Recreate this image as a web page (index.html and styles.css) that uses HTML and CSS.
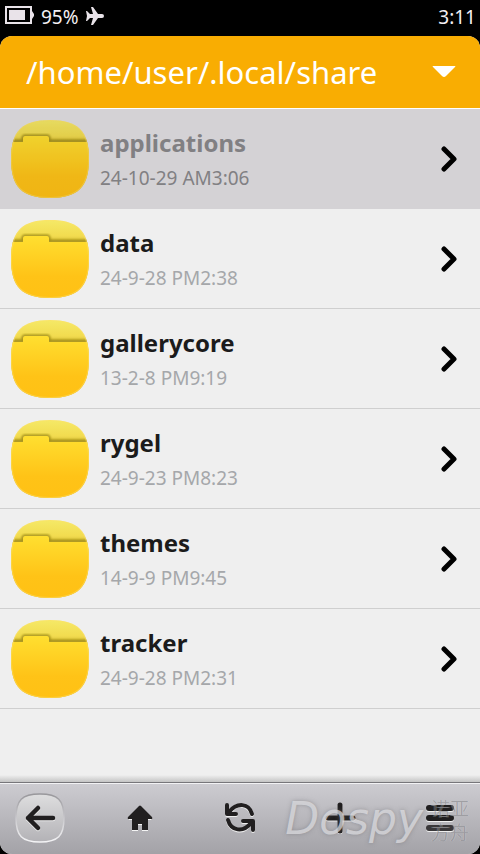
FILE: index.html
```html
<!DOCTYPE html>
<html lang="en">
<head>
<meta charset="utf-8">
<meta name="viewport" content="width=device-width, initial-scale=1">
<title>File manager</title>
<link rel="stylesheet" href="styles.css">
</head>
<body>
<svg class="defs" aria-hidden="true">
  <defs>
    <linearGradient id="back" x1="0" y1="0" x2="0" y2="1">
      <stop offset="0" stop-color="#f5e967"/>
      <stop offset=".2" stop-color="#f2dc50"/>
      <stop offset=".28" stop-color="#e0c53c"/>
    </linearGradient>
    <linearGradient id="front" x1="0" y1="16" x2="0" y2="78" gradientUnits="userSpaceOnUse">
      <stop offset="0" stop-color="#ffdf30"/>
      <stop offset=".65" stop-color="#ffc317"/>
      <stop offset="1" stop-color="#ffc114"/>
    </linearGradient>
    <filter id="soft" x="-10%" y="-50%" width="120%" height="200%"><feGaussianBlur stdDeviation="1.2"/></filter>
    <clipPath id="shape"><path d="M39 0C67 0 78 11 78 39S67 78 39 78 0 67 0 39 11 0 39 0Z"/></clipPath>
    <symbol id="folder" viewBox="0 0 78 78">
      <g clip-path="url(#shape)">
        <rect width="78" height="78" fill="url(#back)"/>
        <path d="M-4 21H12V18Q12 16 14 16H36Q38 16 38 18V21H82" fill="none" stroke="#8f7d10" stroke-opacity=".8" stroke-width="3" filter="url(#soft)"/>
        <path d="M0 22H12V18Q12 16 14 16H36Q38 16 38 18V22H78V78H0Z" fill="url(#front)"/>
        <path d="M39 0C67 0 78 11 78 39S67 78 39 78 0 67 0 39 11 0 39 0Z" fill="none" stroke="#ffe06a" stroke-opacity=".45" stroke-width="2"/>
      </g>
    </symbol>
    <symbol id="chevron" viewBox="0 0 16 26">
      <path d="M3 3L13 13 3 23" fill="none" stroke="#000" stroke-width="5" stroke-linecap="round" stroke-linejoin="round"/>
    </symbol>
  </defs>
</svg>

<div class="status">
  <div class="status-left">
    <svg class="battery" viewBox="0 0 29 18" aria-label="Battery"><path d="M1 1H26V17H1Z" fill="none" stroke="#e9e3e9" stroke-width="2"/><path d="M4 4H20V14H4Z" fill="#e9e3e9"/><path d="M26 5H27L29 8V10L27 13H26Z" fill="#e9e3e9"/></svg>
    <span>95%</span>
    <svg class="plane" viewBox="0 0 18 18" aria-label="Flight mode"><path d="M18 9Q18 7 16 7L12 7 7 0H5L7 7 4 7 1 4H0L1 9 0 14H1L4 11 7 11 5 18H7L12 11 16 11Q18 11 18 9Z" fill="#e9e3e9"/></svg>
  </div>
  <time>3:11</time>
</div>

<div class="app">
  <header>
    <button class="path" type="button">
      <span>/home/user/.local/share</span>
      <svg class="caret" viewBox="0 0 24 12" aria-hidden="true"><path d="M1 0H23Q24 0 23 1L14 10Q12 12 10 10L1 1Q0 0 1 0Z" fill="#fff"/></svg>
    </button>
  </header>

  <main>
    <ul class="files">
      <li><a class="row selected" href="#applications"><svg class="folder"><use href="#folder"/></svg><span class="info"><strong>applications</strong><small>24-10-29 AM3:06</small></span><svg class="chevron"><use href="#chevron"/></svg></a></li>
      <li><a class="row" href="#data"><svg class="folder"><use href="#folder"/></svg><span class="info"><strong>data</strong><small>24-9-28 PM2:38</small></span><svg class="chevron"><use href="#chevron"/></svg></a></li>
      <li><a class="row" href="#gallerycore"><svg class="folder"><use href="#folder"/></svg><span class="info"><strong>gallerycore</strong><small>13-2-8 PM9:19</small></span><svg class="chevron"><use href="#chevron"/></svg></a></li>
      <li><a class="row" href="#rygel"><svg class="folder"><use href="#folder"/></svg><span class="info"><strong>rygel</strong><small>24-9-23 PM8:23</small></span><svg class="chevron"><use href="#chevron"/></svg></a></li>
      <li><a class="row" href="#themes"><svg class="folder"><use href="#folder"/></svg><span class="info"><strong>themes</strong><small>14-9-9 PM9:45</small></span><svg class="chevron"><use href="#chevron"/></svg></a></li>
      <li><a class="row" href="#tracker"><svg class="folder"><use href="#folder"/></svg><span class="info"><strong>tracker</strong><small>24-9-28 PM2:31</small></span><svg class="chevron"><use href="#chevron"/></svg></a></li>
    </ul>
  </main>

  <nav class="toolbar">
    <button type="button" aria-label="Back">
      <svg class="back" viewBox="0 0 50 50">
        <defs>
          <linearGradient id="key" x1="0" y1="0" x2="0" y2="1"><stop offset="0" stop-color="#dededf"/><stop offset="1" stop-color="#b3b2b6"/></linearGradient>
          <linearGradient id="rim" x1="0" y1="0" x2="0" y2="1"><stop offset="0" stop-color="#98979b"/><stop offset=".5" stop-color="#c9c8cc"/><stop offset="1" stop-color="#f4f4f6"/></linearGradient>
        </defs>
        <path d="M25 1C43 1 49 7 49 25S43 49 25 49 1 43 1 25 7 1 25 1Z" fill="url(#key)" stroke="url(#rim)" stroke-width="1.5"/>
        <g fill="none" stroke-width="4.5" stroke-linecap="round" stroke-linejoin="round">
          <path d="M38 26H13M23 16L13 26 23 36" stroke="#eee"/>
          <path d="M38 25H13M23 15L13 25 23 35" stroke="#211f20"/>
        </g>
      </svg>
    </button>
    <button type="button" aria-label="Home">
      <svg class="icon" viewBox="0 0 32 32">
        <path d="M16 5L28 16 27 18H24V29H18V23H14V29H8V18H5L4 16Z" fill="#f4f4f4"/>
        <path d="M15 4Q16 3 17 4L28 15Q29 17 27 17H24V28H18V22H14V28H8V17H5Q3 17 4 15Z" fill="#211f20"/>
      </svg>
    </button>
    <button type="button" aria-label="Refresh">
      <svg class="icon" viewBox="0 0 32 32">
        <g fill="none" stroke="#eee" stroke-width="4" stroke-linecap="round" stroke-linejoin="round" transform="translate(0 1)"><path d="M28 12C25 1 13 0 8 7"/><path d="M4 18C7 29 19 30 24 23"/><path d="M3 3V12H12M29 28V19H19"/></g>
        <g fill="none" stroke="#211f20" stroke-width="4" stroke-linecap="round" stroke-linejoin="round"><path d="M28 12C25 1 13 0 5 10"/><path d="M4 18C7 29 19 31 27 21"/><path d="M3 3V12H12M29 28V19H19"/></g>
      </svg>
    </button>
    <button type="button" aria-label="Add">
      <svg class="icon" viewBox="0 0 32 32" fill="none" stroke-width="5" stroke-linecap="round"><path d="M16 4V30M4 17H29" stroke="#eee"/><path d="M16 3V29M4 16H29" stroke="#211f20"/></svg>
    </button>
    <button type="button" aria-label="Menu">
      <svg class="icon" viewBox="0 0 32 32" fill="none" stroke-width="6" stroke-linecap="round"><path d="M5 7H27M5 17H27M5 27H27" stroke="#eee"/><path d="M5 6H27M5 16H27" stroke="#211f20"/><path d="M5 26H27" stroke="#3a383a"/></svg>
    </button>
    <div class="watermark"><span class="brand">Dospy</span><span class="sub" lang="zh">诺亚<br>方舟</span></div>
  </nav>
</div>
</body>
</html>
```
FILE: styles.css
```css
* { box-sizing: border-box; }

body {
  margin: 0;
  min-height: 100vh;
  display: flex;
  flex-direction: column;
  background: #000;
  font-family: "Noto Sans", "Noto Sans CJK SC", sans-serif;
}

svg { display: block; flex: none; }
.defs { position: absolute; width: 0; height: 0; }

button {
  margin: 0;
  padding: 0;
  border: 0;
  background: none;
  color: inherit;
  font: inherit;
}

.status {
  display: flex;
  justify-content: space-between;
  align-items: center;
  height: 36px;
  padding: 0 4px 2px 5px;
  color: #f3eff3;
  font-size: 19px;
}
.status-left { display: flex; align-items: center; gap: 7px; }
.battery { width: 29px; height: 18px; margin-bottom: 4px; }
.plane { width: 18px; height: 18px; margin-bottom: 2px; }

.app {
  flex: 1;
  display: flex;
  flex-direction: column;
  overflow: hidden;
  border-radius: 12px;
  background: #efefef;
}

header {
  background: #f9ad02;
  border-bottom: 1px solid #fff;
}
.path {
  display: flex;
  justify-content: space-between;
  align-items: center;
  width: 100%;
  height: 72px;
  padding: 0 24px 0 26px;
  color: #fff;
  font-size: 31px;
}
.caret { width: 24px; height: 12px; }

main {
  flex: 1;
  background: linear-gradient(to top, #c4c4c4, #efefef 7px);
}
.files { margin: 0; padding: 0; list-style: none; }
.row {
  display: flex;
  align-items: center;
  gap: 11px;
  height: 100px;
  padding: 0 23px 0 11px;
  border-bottom: 1px solid #cfcfcf;
  color: #1b1b1b;
  text-decoration: none;
}
.folder { width: 78px; height: 78px; }
.info { flex: 1; display: flex; flex-direction: column; padding-top: 2px; }
.info strong { font-size: 24px; line-height: 36px; font-weight: 700; }
.info small { font-size: 19px; line-height: 34px; color: #a5a7aa; }
.chevron { width: 16px; height: 26px; }

.selected { background: #d4d2d5; border-color: #d4d2d5; color: #818083; }
.selected small { color: #818083; }
.selected .folder { filter: brightness(.94); }

.toolbar {
  position: relative;
  display: flex;
  justify-content: space-between;
  height: 72px;
  border-top: 1px solid #77767a;
  box-shadow: inset 0 1px #f2f2f4;
  background: linear-gradient(#cdccd1, #a3a2a7);
}
.toolbar button {
  display: grid;
  place-items: center;
  width: 80px;
  padding-bottom: 2px;
}
.back { width: 50px; height: 50px; }
.icon { width: 32px; height: 32px; }

.watermark {
  position: absolute;
  right: 11px;
  bottom: 9px;
  display: flex;
  align-items: flex-end;
  gap: 8px;
  pointer-events: none;
}
.brand {
  font-family: "DejaVu Sans", sans-serif;
  font-size: 44px;
  line-height: 52px;
  font-style: italic;
  color: rgba(226, 226, 230, .7);
  text-shadow: 0 0 4px rgba(110, 109, 113, .5);
}
.sub {
  font-size: 19px;
  line-height: 24px;
  font-weight: 300;
  color: rgba(130, 130, 134, .6);
  text-shadow: 1px 0 rgba(215, 215, 219, .3), -1px 0 rgba(215, 215, 219, .3);
}
```
